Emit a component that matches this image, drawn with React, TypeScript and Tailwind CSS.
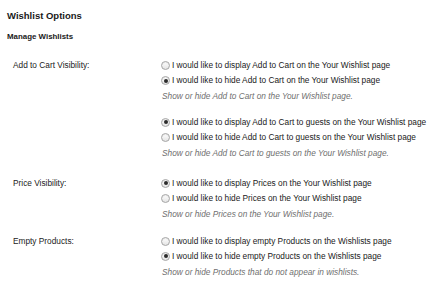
import React from "react";

type Opt = { label: string; checked: boolean };

function Radio({ checked }: { checked: boolean }) {
  return (
    <span className="relative inline-flex h-[9px] w-[9px] shrink-0 items-center justify-center rounded-full border border-[#a5a5a5] bg-gradient-to-b from-[#ffffff] to-[#e4e4e4] shadow-[inset_0_1px_1px_rgba(0,0,0,0.08)]">
      {checked && <span className="h-[4px] w-[4px] rounded-full bg-[#2b2b2b]" />}
    </span>
  );
}

function Group({ label, options, help, className }: { label?: string; options: Opt[]; help: string; className: string }) {
  return (
    <div className={`flex ${className}`}>
      <div className="w-[161px] shrink-0 pl-[13px] leading-[15px] text-[#222]">{label}</div>
      <div className="flex flex-col">
        {options.map((o) => (
          <div key={o.label} className="flex h-[15px] items-center gap-[2px] text-[#1a1a1a]">
            <Radio checked={o.checked} />
            <span>{o.label}</span>
          </div>
        ))}
        <div className="mt-[1px] pl-px leading-[15px] italic text-[#6f6f6f]">{help}</div>
      </div>
    </div>
  );
}

export default function App() {
  return (
    <div className="h-[290px] w-[440px] overflow-hidden bg-white font-['Liberation_Sans',Arial,sans-serif] text-[8.3px]">
      <div className="pl-[7px] pt-[8px] text-[9.5px] font-bold leading-[15px] text-[#1a1a1a]">Wishlist Options</div>
      <div className="mt-[5.5px] pl-[7px] text-[7.9px] font-bold leading-[15px] text-[#1a1a1a]">Manage Wishlists</div>
      <Group
        className="mt-[14.5px]"
        label="Add to Cart Visibility:"
        options={[
          { label: "I would like to display Add to Cart on the Your Wishlist page", checked: false },
          { label: "I would like to hide Add to Cart on the Your Wishlist page", checked: true },
        ]}
        help="Show or hide Add to Cart on the Your Wishlist page."
      />
      <Group
        className="mt-[10.5px]"
        options={[
          { label: "I would like to display Add to Cart to guests on the Your Wishlist page", checked: true },
          { label: "I would like to hide Add to Cart to guests on the Your Wishlist page", checked: false },
        ]}
        help="Show or hide Add to Cart to guests on the Your Wishlist page."
      />
      <Group
        className="mt-[15px]"
        label="Price Visibility:"
        options={[
          { label: "I would like to display Prices on the Your Wishlist page", checked: true },
          { label: "I would like to hide Prices on the Your Wishlist page", checked: false },
        ]}
        help="Show or hide Prices on the Your Wishlist page."
      />
      <Group
        className="mt-[12px]"
        label="Empty Products:"
        options={[
          { label: "I would like to display empty Products on the Wishlists page", checked: false },
          { label: "I would like to hide empty Products on the Wishlists page", checked: true },
        ]}
        help="Show or hide Products that do not appear in wishlists."
      />
    </div>
  );
}
